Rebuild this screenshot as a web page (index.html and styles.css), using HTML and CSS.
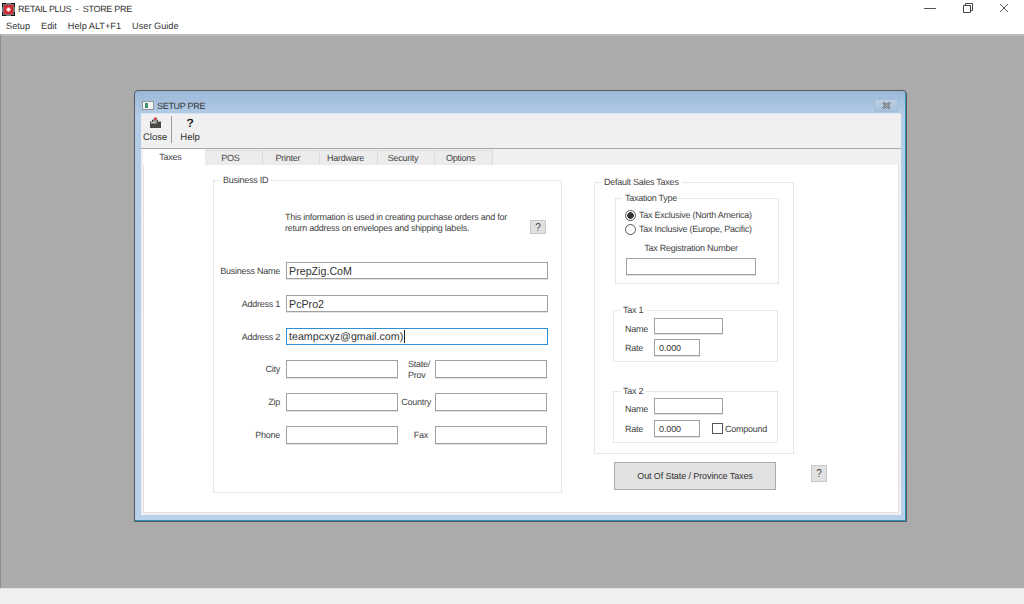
FILE: index.html
```html
<!DOCTYPE html>
<html lang="en">
<head>
  <meta charset="UTF-8">
  <meta name="viewport" content="width=device-width, initial-scale=1.0">
  <title>Retail Plus - Store Pre</title>
  <link rel="stylesheet" href="styles.css">
</head>
<body>

  <!-- Main window chrome -->
  <header class="app-bar">
    <div class="app-title">
      <svg class="app-icon" width="13" height="13" viewBox="0 0 13 13">
        <rect width="13" height="13" fill="#777"/>
        <path d="M0 0h4v1H1v3H0zM9 0h4v4h-1V1H9zM0 9h1v3h3v1H0zM12 9h1v4H9v-1h3z" fill="#111"/>
        <rect x="2" y="2" width="9" height="9" fill="#cf2a33"/>
        <path d="M5.500 4.500h2v1h1v2h-1v1h-2v-1h-1v-2h1z" fill="#fff"/>
      </svg>
      <span>RETAIL PLUS &nbsp;-&nbsp; STORE PRE</span>
    </div>
    <div class="win-controls">
      <svg class="win-min" width="12" height="10" viewBox="0 0 12 10"><path d="M0 5.500h12" stroke="#555" fill="none"/></svg>
      <svg width="10" height="10" viewBox="0 0 10 10"><path d="M.5 2.500h7v7h-7zM2.500 2.500v-2h7v7h-2" stroke="#444" fill="none"/></svg>
      <svg width="10" height="10" viewBox="0 0 10 10"><path d="M1 1l8 8M9 1L1 9" stroke="#555" fill="none"/></svg>
    </div>
  </header>
  <nav class="menu-bar">
    <span>Setup</span>
    <span>Edit</span>
    <span>Help ALT+F1</span>
    <span>User Guide</span>
  </nav>

  <main class="desktop">
    <section class="dialog">
      <div class="dialog-title">
        <svg width="12" height="9" viewBox="0 0 12 9">
          <rect width="12" height="9" fill="#8f979c"/>
          <rect x="1" y="1" width="10" height="7" fill="#f2f4f4"/>
          <rect x="3" y="2" width="3" height="5" fill="#3f8f6a"/>
        </svg>
        <span>SETUP PRE</span>
        <div class="dialog-close">
          <svg width="11" height="9" viewBox="0 0 11 9"><path d="M2 1.500l7 6M9 1.500l-7 6" stroke="#6b6f76" stroke-width="2.400" fill="none"/><path d="M2 1.500l7 6M9 1.500l-7 6" stroke="#d8dbe0" stroke-width=".7" fill="none"/></svg>
        </div>
      </div>

      <div class="dialog-client">
        <div class="toolbar">
          <div class="tool close-tool">
            <svg width="13" height="12" viewBox="0 0 13 12">
              <path d="M1 4.500h11V11H1z" fill="#4a4a4a"/>
              <path d="M2 5h5l1 1.500H2z" fill="#c9bfae"/>
              <path d="M3.500 4.500V3h5v1.500" stroke="#333" fill="none"/>
              <circle cx="6.500" cy="1.500" r="1.300" fill="#e0252f"/>
            </svg>
            <span>Close</span>
          </div>
          <div class="tool-sep"></div>
          <div class="tool">
            <span class="help-mark">?</span>
            <span>Help</span>
          </div>
        </div>

        <div class="tabs">
          <div class="tab active">Taxes</div>
          <div class="tab">POS</div>
          <div class="tab">Printer</div>
          <div class="tab">Hardware</div>
          <div class="tab">Security</div>
          <div class="tab">Options</div>
        </div>

        <div class="tab-panel">
          <!-- Left side -->
          <fieldset class="group business">
            <legend>Business ID</legend>
            <div class="intro">
              <p>This information is used in creating purchase orders and for<br>return address on envelopes and shipping labels.</p>
              <button class="q-btn" type="button">?</button>
            </div>
            <div class="wide-rows">
              <label>Business Name</label><input class="big" type="text" value="PrepZig.CoM">
              <label>Address 1</label><input class="big" type="text" value="PcPro2">
              <label>Address 2</label><div class="input big focused">teampcxyz@gmail.com)<i class="caret"></i></div>
            </div>
            <div class="split-rows">
              <label>City</label><input type="text"><label class="state">State/<br>Prov</label><input type="text">
              <label>Zip</label><input type="text"><label class="country">Country</label><input type="text">
              <label>Phone</label><input type="text"><label class="fax">Fax</label><input type="text">
            </div>
          </fieldset>

          <!-- Right side -->
          <div class="right-col">
            <fieldset class="group sales">
              <legend>Default Sales Taxes</legend>
              <fieldset class="group tax-type">
                <legend>Taxation Type</legend>
                <div class="radio-row first"><i class="radio on"></i>Tax Exclusive (North America)</div>
                <div class="radio-row"><i class="radio"></i>Tax Inclusive (Europe, Pacific)</div>
                <div class="reg-label">Tax Registration Number</div>
                <input class="reg-input" type="text">
              </fieldset>
              <fieldset class="group tax-box tax-one">
                <legend>Tax 1</legend>
                <div class="tax-row"><label class="name-label">Name</label><input class="name-input" type="text"></div>
                <div class="tax-row"><label>Rate</label><input class="rate-input" type="text" value="0.000"></div>
              </fieldset>
              <fieldset class="group tax-box tax-two">
                <legend>Tax 2</legend>
                <div class="tax-row"><label class="name-label">Name</label><input class="name-input" type="text"></div>
                <div class="tax-row"><label>Rate</label><input class="rate-input" type="text" value="0.000"><i class="check"></i><span>Compound</span></div>
              </fieldset>
            </fieldset>
            <div class="out-of-state">
              <button class="state-btn" type="button">Out Of State / Province Taxes</button>
              <button class="q-btn tall" type="button">?</button>
            </div>
          </div>
        </div>
      </div>
    </section>
  </main>

  <footer class="status-bar"></footer>

</body>
</html>
```

FILE: styles.css
```css
/* Universal Styles */
* { box-sizing: border-box; margin: 0; padding: 0; }

body {
  font-family: "Liberation Sans", Arial, sans-serif;
  font-size: 9px;
  letter-spacing: -0.25px;
  text-rendering: geometricPrecision;
  color: #444;
  background: #fff;
  height: 604px;
  width: 1024px;
  overflow: hidden;
  display: flex;
  flex-direction: column;
}

/* Main window */
.app-bar {
  height: 18px;
  display: flex;
  align-items: center;
  justify-content: space-between;
  background: #fff;
}
.app-title { display: flex; align-items: center; padding-left: 2px; gap: 3px; font-size: 9px; letter-spacing: -0.3px; color: #333; }
.win-controls { display: flex; gap: 26px; padding: 0 15px 2px 0; align-items: center; }
.win-min { margin-right: 1px; }

.menu-bar {
  height: 16px;
  display: flex;
  align-items: center;
  gap: 11px;
  padding: 0 0 0 6px;
  font-size: 9.200px;
  letter-spacing: 0;
  color: #333;
  background: #fff;
}

.desktop {
  flex: 1;
  background: #ababab;
  border-top: 2px solid #b9b9b9;
  border-left: 1px solid #8e8e8e;
  padding: 54px 0 0 133px;
}

.status-bar { height: 16px; background: #efefef; border-top: 1px solid #e2e2e2; }

/* Setup dialog */
.dialog {
  width: 773px;
  height: 432px;
  display: flex;
  flex-direction: column;
  padding: 0 5px 6px 6px;
  background: linear-gradient(180deg, #9ab8d8 0, #b4cde6 24px, #b9d1ea 100%);
  border: 1px solid #55595d;
  border-radius: 4px 4px 0 0;
  box-shadow: inset -1px -1px 0 #2f93b4;
}

.dialog-title {
  height: 23px;
  display: flex;
  align-items: center;
  gap: 3px;
  padding: 6px 3px 0 1px;
  font-size: 9px;
  letter-spacing: -0.3px;
  color: #333;
  flex-shrink: 0;
}
.dialog-close {
  margin-left: auto;
  width: 24px;
  height: 13px;
  display: flex;
  align-items: center;
  justify-content: center;
  background: linear-gradient(180deg, #bdd0e5, #a8c1db);
  border: 1px solid #a3bcd6;
}

.dialog-client {
  flex: 1;
  background: #f0f0f0;
  display: flex;
  flex-direction: column;
  box-shadow: 0 -1px 0 #d6e4f2;
}

.toolbar {
  height: 35px;
  display: flex;
  align-items: stretch;
  padding: 3px 0 5px 0;
  border-bottom: 1px solid #a8a8a8;
  flex-shrink: 0;
}
.tool {
  display: flex;
  flex-direction: column;
  align-items: center;
  justify-content: space-between;
  padding: 0 3px;
  font-size: 9.500px;
  letter-spacing: 0;
  line-height: 11px;
  color: #333;
}
.close-tool { padding-left: 2px; }
.tool-sep { width: 1px; margin: -1px 5px 0 1px; background: #9c9c9c; }
.help-mark { font-size: 12px; font-weight: bold; line-height: 13px; color: #222; }

.tabs { display: flex; height: 16px; padding-left: 2px; flex-shrink: 0; }
.tab {
  width: 57.600px;
  height: 15px;
  margin-top: 1px;
  padding-right: 6px;
  display: flex;
  align-items: center;
  justify-content: center;
  background: #ececec;
  border: 1px solid #dcdcdc;
  border-bottom: none;
  border-left: none;
  color: #444;
}
.tab.active { width: 62px; height: 16px; margin-top: 0; padding-right: 7px; background: #fff; border: none; }

.tab-panel {
  flex: 1;
  margin: 0 2px 2px 2px;
  background: #fff;
  border: 1px solid #e4e4e4;
  border-top: none;
  display: flex;
  align-items: flex-start;
  padding: 9px 0 0 69px;
}

/* Group boxes */
.group { border: 1px solid #e6e6e6; min-width: 0; }
.group legend { font-size: 9px; line-height: 12px; padding: 0 3px; margin-left: 6px; color: #444; }

.business { width: 349px; height: 319px; }

.intro {
  display: flex;
  align-items: flex-end;
  justify-content: space-between;
  padding: 26px 15px 0 71px;
}
.intro p { line-height: 11px; color: #444; white-space: nowrap; }

.q-btn {
  width: 16px;
  height: 14px;
  background: #e1e1e1;
  border: 1px solid #c8c8c8;
  font: 10px "Liberation Sans", Arial, sans-serif;
  color: #444;
}
.q-btn.tall { height: 17px; margin-top: 3px; }

label { color: #444; text-align: right; white-space: nowrap; }

input, .input {
  height: 17px;
  border: 1px solid #a0a0a0;
  box-shadow: 0 1px 0 #e2e2e2;
  background: #fff;
  font: 9px "Liberation Sans", Arial, sans-serif;
  letter-spacing: -0.1px;
  color: #333;
  padding: 0 2px;
  outline: none;
}
.big { font-size: 10.700px; letter-spacing: 0; color: #333; }
.focused { display: flex; align-items: center; border-color: #2d8fd5; box-shadow: none; }
.caret { width: 1px; height: 13px; background: #222; margin-left: 1px; }

.wide-rows {
  display: grid;
  grid-template-columns: 66px 262px;
  grid-auto-rows: 17px;
  column-gap: 6px;
  row-gap: 16px;
  align-items: center;
  margin-top: 28px;
}

.split-rows {
  display: grid;
  grid-template-columns: 72px 112px 37px 112px;
  grid-auto-rows: 18px;
  row-gap: 15px;
  align-items: center;
  margin-top: 15px;
}
.split-rows input { height: 18px; }
.split-rows label { padding-right: 6px; }
.split-rows label.state { text-align: left; line-height: 11px; padding: 1px 0 0 10px; }
.split-rows label.country { padding-right: 4px; }
.split-rows label.fax { padding-right: 7px; }

/* Right column */
.right-col { margin: 2px 0 0 32px; width: 234px; }
.sales { width: 200px; height: 278px; }

.tax-type { width: 164px; height: 92px; margin: 4px 0 0 20px; }
.radio-row { display: flex; align-items: center; height: 14px; margin-left: 9px; color: #444; gap: 3px; }
.radio-row.first { margin-top: 4px; }
.radio {
  width: 11px;
  height: 11px;
  border: 1px solid #555;
  border-radius: 50%;
  background: #fff;
  display: block;
}
.radio.on { background: radial-gradient(circle, #333 0, #333 3px, #fff 3.500px); }
.reg-label { text-align: center; line-height: 11px; color: #444; margin: 7px 0 4px 10px; width: 130px; }
.reg-input { width: 130px; display: block; margin-left: 10px; }

.tax-box { width: 165px; height: 58px; margin-left: 18px; }
.tax-one { margin-top: 20px; padding-top: 2px; }
.tax-two { margin-top: 23px; padding-top: 1px; }
.tax-row { display: flex; align-items: center; color: #444; margin: 0 0 5px 11px; }
.tax-two .tax-row { margin-bottom: 6px; }
.tax-row label { width: 29px; text-align: left; }
.tax-row label.name-label { padding-top: 5px; }
.name-input { width: 69px; height: 16px; }
.rate-input { width: 46px; height: 17px; padding-left: 4px; }
.check { width: 11px; height: 11px; border: 1px solid #555; background: #fff; margin: 0 2px 0 12px; display: block; }

.out-of-state { display: flex; align-items: flex-start; padding: 8px 0 0 20px; gap: 35px; }
.state-btn {
  width: 162px;
  height: 28px;
  background: #e1e1e1;
  border: 1px solid #adadad;
  font: 9px "Liberation Sans", Arial, sans-serif;
  letter-spacing: -0.1px;
  color: #333;
}
```
